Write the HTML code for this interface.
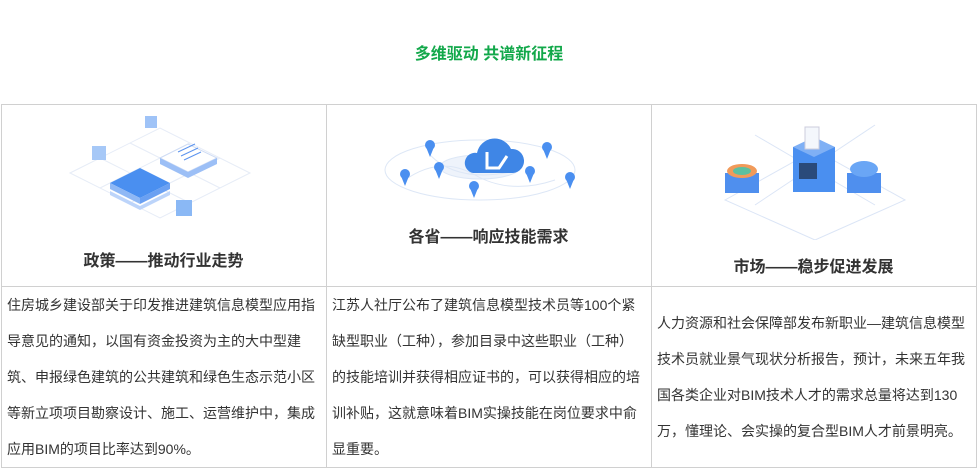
<!DOCTYPE html>
<html><head><meta charset="utf-8"><style>
*{margin:0;padding:0;box-sizing:border-box}
body{width:978px;height:468px;background:#fff;font-family:"Liberation Sans","Noto Sans CJK SC",sans-serif;position:relative;overflow:hidden}
.h{position:absolute;left:0;width:978px;top:45px;text-align:center;color:#12a84a;font-weight:bold;font-size:16px;line-height:20px}
.tb{position:absolute;left:1px;top:104px;width:976px;height:364px;border:1px solid #d0d0d0}
.v{position:absolute;top:0;bottom:0;width:1px;background:#d0d0d0}
.hr{position:absolute;left:0;right:0;top:181px;height:1px;background:#d0d0d0}
.t{position:absolute;font-size:16px;font-weight:bold;color:#333;text-align:center;width:325px;line-height:20px}
.p{position:absolute;font-size:14px;color:#333;line-height:36px;white-space:nowrap}
svg{position:absolute}
</style></head><body>
<div class="h">多维驱动 共谱新征程</div>
<div class="tb">
<div class="v" style="left:324px"></div>
<div class="v" style="left:649px"></div>
<div class="hr"></div>
</div>
<svg style="left:60px;top:108px" width="200" height="120" viewBox="0 0 200 120">
<g stroke="#e6ecf7" stroke-width="1" fill="none">
<path d="M10 65 L100 20 L190 65 L100 110 Z"/><path d="M40 50 L130 95 M70 35 L160 80 M40 80 L130 35 M70 95 L160 50"/>
</g>
<path d="M50 75 L80 60 L110 75 L80 90 Z" fill="#4a8ff0"/>
<path d="M50 75 L80 90 L80 96 L50 81 Z" fill="#8fb8f5"/><path d="M110 75 L80 90 L80 96 L110 81 Z" fill="#6aa0f2"/>
<path d="M50 83 L80 98 L110 83 L110 87 L80 102 L50 87Z" fill="#bcd4fa"/>
<path d="M100 50 L128 36 L157 50 L128 64 Z" fill="#fff" stroke="#cfdcf4"/>
<path d="M100 50 L128 64 L157 50 L157 56 L128 70 L100 56Z" fill="#9cbff6"/>
<path d="M118 44 L135 36 M121 48 L138 40 M124 52 L141 44" stroke="#5b93ee"/>
<rect x="85" y="8" width="12" height="12" fill="#9fc3f7"/><rect x="32" y="38" width="14" height="14" fill="#a6c8f7"/><rect x="116" y="92" width="16" height="16" fill="#8ab8f5"/>
</svg>
<div class="t" style="left:1px;top:252px">政策——推动行业走势</div>
<svg style="left:380px;top:125px" width="200" height="80" viewBox="0 0 200 80">
<g fill="none" stroke="#dde7f6"><ellipse cx="100" cy="45" rx="95" ry="30"/><ellipse cx="100" cy="42" rx="40" ry="12" fill="#eef3fb"/>
<path d="M25 55 Q60 30 95 50 T175 55 M50 30 Q80 60 140 45"/></g>
<path d="M93 48 h40 a12 12 0 0 0 -2 -24 a18 18 0 0 0 -34 4 a10 10 0 0 0 -4 20z" fill="#3f86e6"/>
<path d="M107 27 v16 h12 l8 -12" stroke="#fff" stroke-width="3" fill="none"/>
<g fill="#4a8ff0">
<circle cx="50" cy="20" r="5"/><path d="M46 22 L50 32 L54 22Z"/>
<circle cx="25" cy="49" r="5"/><path d="M21 51 L25 61 L29 51Z"/>
<circle cx="59" cy="42" r="5"/><path d="M55 44 L59 54 L63 44Z"/>
<circle cx="94" cy="61" r="5"/><path d="M90 63 L94 73 L98 63Z"/>
<circle cx="150" cy="46" r="5"/><path d="M146 48 L150 58 L154 48Z"/>
<circle cx="167" cy="22" r="5"/><path d="M163 24 L167 34 L171 24Z"/>
<circle cx="190" cy="52" r="5"/><path d="M186 54 L190 64 L194 54Z"/>
</g>
</svg>
<div class="t" style="left:326px;top:228px">各省——响应技能需求</div>
<svg style="left:715px;top:105px" width="200" height="135" viewBox="0 0 200 135">
<g stroke="#dbe5f6" fill="none"><path d="M10 95 L100 45 L190 95 L100 135Z"/><path d="M40 30 L160 100 M160 20 L40 100"/></g>
<rect x="78" y="42" width="42" height="45" fill="#4a8ff0"/><path d="M78 42 L99 32 L120 42 L99 52Z" fill="#7fb0f5"/>
<rect x="84" y="58" width="18" height="16" fill="#2a4a7a"/>
<rect x="90" y="22" width="14" height="22" fill="#f4f7fc" stroke="#ccd"/>
<rect x="10" y="68" width="34" height="20" fill="#4f8fee"/><ellipse cx="27" cy="66" rx="15" ry="7" fill="#f19a5a"/><ellipse cx="27" cy="66" rx="9" ry="4" fill="#5cc0a0"/>
<rect x="132" y="68" width="34" height="20" fill="#4f8fee"/><ellipse cx="149" cy="64" rx="14" ry="8" fill="#6aa6f5"/>
</svg>
<div class="t" style="left:651px;top:258px">市场——稳步促进发展</div>
<div class="p" style="left:7px;top:287px">住房城乡建设部关于印发推进建筑信息模型应用指<br>导意见的通知，以国有资金投资为主的大中型建<br>筑、申报绿色建筑的公共建筑和绿色生态示范小区<br>等新立项项目勘察设计、施工、运营维护中，集成<br>应用BIM的项目比率达到90%。</div>
<div class="p" style="left:332px;top:287px">江苏人社厅公布了建筑信息模型技术员等100个紧<br>缺型职业（工种），参加目录中这些职业（工种）<br>的技能培训并获得相应证书的，可以获得相应的培<br>训补贴，这就意味着BIM实操技能在岗位要求中俞<br>显重要。</div>
<div class="p" style="left:657px;top:305px">人力资源和社会保障部发布新职业—建筑信息模型<br>技术员就业景气现状分析报告，预计，未来五年我<br>国各类企业对BIM技术人才的需求总量将达到130<br>万，懂理论、会实操的复合型BIM人才前景明亮。</div>
</body></html>
